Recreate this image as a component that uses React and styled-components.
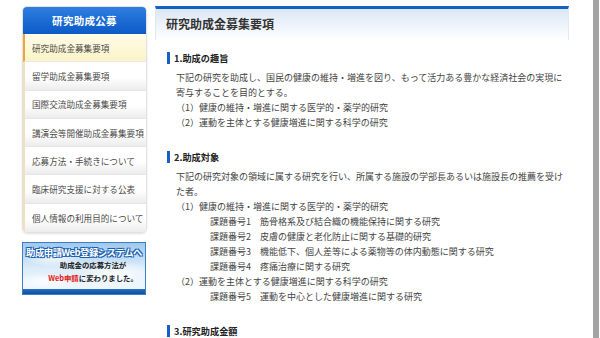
import React from "react";
import styled, { createGlobalStyle } from "styled-components";

const Global = createGlobalStyle`
  html, body { margin: 0; padding: 0; background: #fff; }
  body { font-family: "Noto Sans CJK JP", "Noto Sans", sans-serif; color: #333; }
`;

const Page = styled.div`
  display: flex;
  width: 600px;
  height: 338px;
  overflow: hidden;
`;

const Content = styled.div`
  display: flex;
  align-items: flex-start;
  gap: 8px;
  padding: 6px 0 0 22px;
  flex: 1;
`;

const Scroll = styled.div`
  width: 6px;
  margin-right: 1px;
  background: #a3a3a3;
  align-self: stretch;
`;

const Side = styled.div`
  width: 125px;
  display: flex;
  flex-direction: column;
  gap: 9px;
  flex-shrink: 0;
`;

const Menu = styled.div`
  border: 1px solid #e2e2e2;
  border-radius: 5px;
  overflow: hidden;
  box-shadow: 0 1px 2px rgba(0,0,0,0.12);
`;

const MenuHead = styled.div`
  height: 27px;
  background: linear-gradient(#2f7ee0, #0b5ac7);
  color: #fff;
  font-size: 10.5px;
  font-weight: bold;
  display: flex;
  align-items: center;
  justify-content: center;
  letter-spacing: 0.3px;
`;

const Item = styled.div`
  height: 28.3px;
  box-sizing: border-box;
  display: flex;
  align-items: center;
  padding-left: 7px;
  font-size: 8.6px;
  color: #4a4a4a;
  white-space: nowrap;
  border-left: 2px solid ${p => (p.$active ? "#efa53a" : "#f2dfbd")};
  border-bottom: 1px solid #e6e6e6;
  background: ${p =>
    p.$active
      ? "linear-gradient(#fffce8, #fbf4c8)"
      : "linear-gradient(#ffffff 55%, #ececec)"};
  &:last-child { border-bottom: none; }
`;

const Banner = styled.div`
  height: 53px;
  border: 1px solid #3d7fc4;
  box-sizing: border-box;
  width: 124px;
  background:
    radial-gradient(ellipse 30px 10px at 30px 14px, rgba(255,255,255,0.9), transparent),
    radial-gradient(ellipse 40px 12px at 95px 30px, rgba(255,255,255,0.85), transparent),
    radial-gradient(ellipse 30px 8px at 20px 38px, rgba(255,255,255,0.8), transparent),
    linear-gradient(#9fc8ee, #dcecfa 50%, #eef6fd 80%);
  display: flex;
  flex-direction: column;
  align-items: center;
  position: relative;
  overflow: hidden;
`;

const BannerTitle = styled.div`
  font-size: 9.4px;
  font-weight: bold;
  color: #fff;
  margin-top: 3px;
  letter-spacing: -0.5px;
  line-height: 12px;
  white-space: nowrap;
  text-shadow: 0 0 1px #1d5fb0, 0 0 1px #1d5fb0, 1px 1px 0 #1d5fb0, -1px -1px 0 #1d5fb0, 1px -1px 0 #1d5fb0, -1px 1px 0 #1d5fb0;
`;

const BannerLine = styled.div`
  font-size: 7.4px;
  font-weight: bold;
  color: #222;
  line-height: 13px;
  margin-left: 18px;
  white-space: nowrap;
  &:first-of-type { margin-top: 3px; }
`;

const Red = styled.span`
  color: #e01818;
`;

const BannerBand = styled.div`
  position: absolute;
  left: 0;
  right: 0;
  bottom: 0;
  height: 5px;
  background: linear-gradient(#2a6fc0, #0d4fa0);
`;

const Main = styled.div`
  width: 414px;
  flex-shrink: 0;
`;

const MainHead = styled.div`
  height: 34px;
  box-sizing: border-box;
  border-top: 3px solid #1560c0;
  border-left: 1px solid #e3e9f0;
  border-right: 1px solid #e3e9f0;
  background: linear-gradient(#dbe7f5, #ffffff);
  display: flex;
  align-items: center;
  padding: 0 0 3px 10px;
  font-size: 12px;
  font-weight: bold;
  color: #333;
`;

const Body = styled.div`
  padding: 11px 0 0 12px;
`;

const Section = styled.section`
  margin-bottom: 20px;
`;

const Heading = styled.h2`
  margin: 0 0 5px;
  display: flex;
  align-items: center;
  gap: 4px;
  font-size: 9.2px;
  font-weight: bold;
  color: #222;
  line-height: 14px;
  &::before {
    content: "";
    width: 3px;
    height: 12px;
    background: #1a5fc8;
  }
`;

const P = styled.div`
  font-size: 9px;
  line-height: 15px;
  color: #444;
  padding-left: ${p => (p.$indent ? 43 : 9)}px;
`;

export default function App() {
  const items = [
    "研究助成金募集要項",
    "留学助成金募集要項",
    "国際交流助成金募集要項",
    "講演会等開催助成金募集要項",
    "応募方法・手続きについて",
    "臨床研究支援に対する公表",
    "個人情報の利用目的について",
  ];
  return (
    <Page>
      <Global />
      <Content>
        <Side>
          <Menu>
            <MenuHead>研究助成公募</MenuHead>
            {items.map((t, i) => (
              <Item key={t} $active={i === 0}>{t}</Item>
            ))}
          </Menu>
          <Banner>
            <BannerTitle>助成申請Web登録システムへ</BannerTitle>
            <BannerLine>助成金の応募方法が</BannerLine>
            <BannerLine><Red>Web申請</Red>に変わりました。</BannerLine>
            <BannerBand />
          </Banner>
        </Side>
        <Main>
          <MainHead>研究助成金募集要項</MainHead>
          <Body>
            <Section>
              <Heading>1.助成の趣旨</Heading>
              <P>下記の研究を助成し、国民の健康の維持・増進を図り、もって活力ある豊かな経済社会の実現に寄与することを目的とする。</P>
              <P>（1）健康の維持・増進に関する医学的・薬学的研究</P>
              <P>（2）運動を主体とする健康増進に関する科学の研究</P>
            </Section>
            <Section>
              <Heading>2.助成対象</Heading>
              <P>下記の研究対象の領域に属する研究を行い、所属する施設の学部長あるいは施設長の推薦を受けた者。</P>
              <P>（1）健康の維持・増進に関する医学的・薬学的研究</P>
              <P $indent>課題番号1　筋骨格系及び結合織の機能保持に関する研究</P>
              <P $indent>課題番号2　皮膚の健康と老化防止に関する基礎的研究</P>
              <P $indent>課題番号3　機能低下、個人差等による薬物等の体内動態に関する研究</P>
              <P $indent>課題番号4　疼痛治療に関する研究</P>
              <P>（2）運動を主体とする健康増進に関する科学の研究</P>
              <P $indent>課題番号5　運動を中心とした健康増進に関する研究</P>
            </Section>
            <Section>
              <Heading>3.研究助成金額</Heading>
            </Section>
          </Body>
        </Main>
      </Content>
      <Scroll />
    </Page>
  );
}
